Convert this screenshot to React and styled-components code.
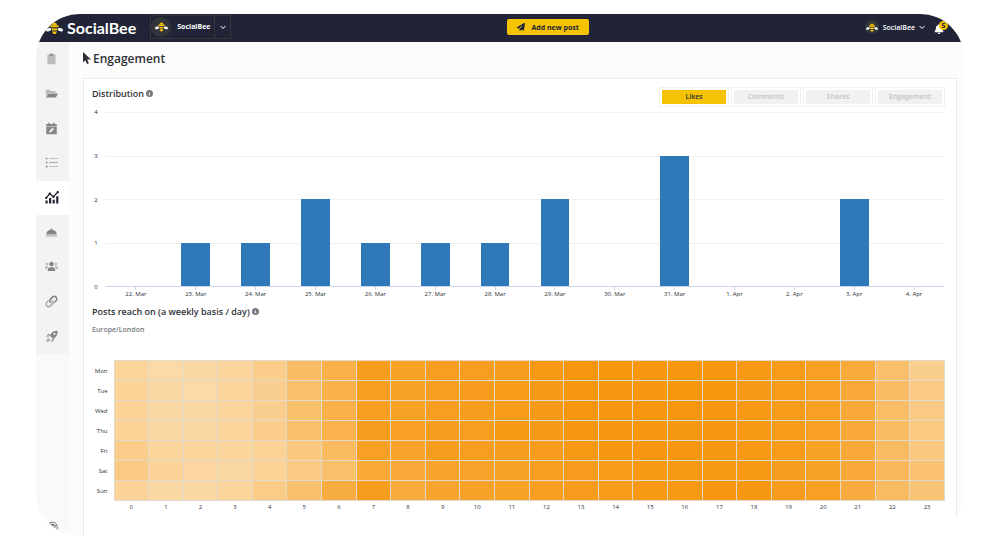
import React, { useState } from 'react';
import styled, { createGlobalStyle } from 'styled-components';
import {
  FaBell,
  FaChevronDown,
  FaCircleInfo,
  FaPaperPlane,
} from 'react-icons/fa6';

const GlobalStyle = createGlobalStyle`
*{
  box-sizing: border-box;
}
body{
  margin: 0;
  background-color: #fff;
  color: #2f3136;
  font-family: 'Open Sans', 'Noto Sans', sans-serif;
}
button{
  font-family: inherit;
  cursor: pointer;
}
svg{
  display: block;
}
`
const Frame = styled.div`
display: flex;
flex-direction: column;
min-height: calc(100vh - 28px);
margin: 14px 36px;
border-radius: 44px;
background-color: #fcfcfc;
overflow: hidden;
`
const Header = styled.header`
display: flex;
align-items: center;
justify-content: space-between;
height: 28px;
padding: 0 20px 2px 10px;
background-color: #212436;
color: #fff;
`
const HeaderGroup = styled.div`
display: flex;
align-items: center;
gap: ${props => props.$gap}px;
`
const Brand = styled.a`
display: flex;
align-items: center;
gap: 4px;
padding-top: 2px;
color: #fff;
font-family: Lato, 'Open Sans', sans-serif;
font-size: 16px;
font-weight: 700;
line-height: 20px;
text-decoration: none;
`
const Workspace = styled.button`
display: flex;
align-items: center;
height: 24px;
padding: 0;
border: 1px dotted #4a4738;
background: none;
color: #fff;
font-size: 7px;
font-weight: 700;
`
const WorkspaceName = styled.span`
padding: 0 4px 2px 6px;
`
const WorkspaceArrow = styled.span`
display: flex;
align-items: center;
justify-content: center;
width: 16px;
height: 22px;
border-left: 1px dotted #4a4738;
`
const Avatar = styled.span`
display: flex;
align-items: center;
justify-content: center;
width: ${props => props.$size}px;
height: ${props => props.$size}px;
border-radius: 50%;
background-color: #33353b;
`
const AddButton = styled.button`
display: flex;
align-items: center;
gap: 6px;
height: 16px;
padding: 0 10px;
border: none;
border-radius: 2px;
background-color: #f6c304;
color: #212436;
font-size: 7px;
font-weight: 700;
`
const Account = styled.button`
display: flex;
align-items: center;
gap: 4px;
padding: 0;
border: none;
background: none;
color: #fff;
font-size: 7px;
font-weight: 600;
`
const Alerts = styled.button`
position: relative;
padding: 3px 0 0;
border: none;
background: none;
color: #fff;
`
const AlertCount = styled.span`
position: absolute;
top: 0;
right: -4px;
width: 9px;
height: 9px;
border-radius: 50%;
background-color: #f6c304;
color: #212436;
font-size: 7px;
font-weight: 700;
line-height: 9px;
text-align: center;
`
const Body = styled.div`
display: flex;
flex: 1;
`
const Sidebar = styled.aside`
display: flex;
flex-direction: column;
justify-content: space-between;
width: 33px;
background-color: #f9f9f9;
`
const Menu = styled.nav`
display: grid;
grid-auto-rows: 1fr;
height: 312px;
`
const MenuLink = styled.a`
display: flex;
align-items: center;
justify-content: center;
padding: 0 2px 1px 0;
background-color: ${props => props.$active ? '#fff' : '#f3f3f3'};
color: ${props => props.$active ? '#212436' : '#868686'};
`
const SidebarFoot = styled.a`
display: flex;
justify-content: center;
padding-bottom: 5px;
color: #5c5f63;
`
const Main = styled.main`
display: flex;
flex: 1;
flex-direction: column;
min-width: 0;
padding: 0 7px 0 14px;
`
const PageTitle = styled.h1`
display: flex;
align-items: center;
gap: 2px;
height: 36px;
margin: 0;
padding-bottom: 4px;
font-size: 12px;
font-weight: 600;
`
const Card = styled.section`
flex: 1;
padding: 8px 8px 16px;
border: 1px solid #e9e9e9;
border-bottom: none;
background-color: #fff;
`
const Toolbar = styled.div`
display: flex;
justify-content: space-between;
height: 20px;
`
const SectionTitle = styled.h2`
display: flex;
align-items: center;
gap: 2px;
height: 12px;
margin: 0;
font-size: 9px;
font-weight: 600;
svg{
  color: #77797d;
}
`
const Tabs = styled.div`
display: flex;
gap: 2px;
padding-right: 3px;
`
const Tab = styled.button`
min-width: 70px;
height: 20px;
padding: 2px;
border: 1px solid #f1f1f1;
background-color: ${props => props.$active ? '#f6c304' : '#f1f1f1'};
background-clip: content-box;
color: ${props => props.$active ? '#2f3136' : '#c3c3c3'};
font-size: 7px;
font-weight: 600;
line-height: 14px;
`
const Chart = styled.div`
display: grid;
grid-template-columns: 8px 1fr;
column-gap: 6px;
padding: 5px 4px 0 0;
`
const YAxis = styled.div`
display: flex;
flex-direction: column;
justify-content: space-between;
margin: -4px 0;
font-size: 6px;
line-height: 8px;
text-align: center;
`
const Plot = styled.div`
display: grid;
height: 175px;
border-bottom: 1px solid #ccd6eb;
`
const GridLines = styled.div`
display: grid;
grid-area: 1 / 1;
grid-auto-rows: 1fr;
`
const GridLine = styled.div`
border-top: 1px solid #f0f0f0;
`
const Bars = styled.div`
display: grid;
grid-area: 1 / 1;
grid-template-columns: repeat(14, 1fr);
`
const BarSlot = styled.div`
display: flex;
align-items: flex-end;
justify-content: center;
`
const Bar = styled.div`
width: 48%;
background-color: #3079b8;
`
const Dates = styled.div`
display: grid;
grid-column: 2;
grid-template-columns: repeat(14, 1fr);
font-size: 6px;
line-height: 8px;
text-align: center;
`
const DateLabel = styled.span`
&::before{
  content: '';
  display: block;
  width: 1px;
  height: 3px;
  margin: 0 auto;
  background-color: #ccd6eb;
}
`
const Reach = styled.div`
padding-top: 7px;
`
const Zone = styled.p`
margin: 8px 0 25px;
color: #77797d;
font-size: 7px;
font-weight: 600;
line-height: 10px;
`
const HeatTable = styled.table`
width: calc(100% - 3px);
border-collapse: collapse;
table-layout: fixed;
font-size: 6px;
line-height: 8px;
`
const DayHead = styled.th`
width: 22px;
padding: 0 6px 0 0;
font-weight: 400;
text-align: right;
`
const HeatCell = styled.td`
height: 20px;
padding: 0;
border: 1px solid #e3d9c8;
`
const HourHead = styled.th`
padding: 2px 0 0;
font-weight: 400;
text-align: center;
`

const Bee = ({ size }) => (
  <svg width={size} height={size * 0.75} viewBox="0 0 24 18" aria-hidden="true">
    <path d="M7.500 9C5 7.500 0 8.500 0 11.500c0 2.500 5 2.800 7.500-.500z" fill="#fff" />
    <path d="M16.500 9c2.500-1.500 7.500-.5 7.500 2.500 0 2.500-5 2.800-7.500-.500z" fill="#fff" />
    <path d="M8.500 4.500a3.500 3.500 0 0 1 7 0z" fill="#f6c304" />
    <rect x="6" y="4.500" width="12" height="3" rx="1.500" fill="#f6c304" />
    <rect x="8.500" y="9" width="7" height="3" fill="#f6c304" />
    <path d="M8.500 13.500h7c-.5 2-2 3.500-3.500 4.500-1.500-1-3-2.500-3.500-4.500z" fill="#f6c304" />
  </svg>
)

const Cursor = () => (
  <svg width="8" height="12" viewBox="0 0 8 12" fill="currentColor" aria-hidden="true">
    <path d="M0 0v10.500l2.300-2.200L4 12l1.900-.8-1.700-3.600H8z" />
  </svg>
)

const Icon = ({ size = 13, children }) => (
  <svg width={size} height={size} viewBox="0 0 16 16" fill="currentColor" aria-hidden="true">
    {children}
  </svg>
)

const clipboard = (
  <Icon>
    <path d="M3 3h10v12H3z" opacity=".5" />
    <path d="M5.500 2h1.300a1.300 1.300 0 0 1 2.400 0h1.300v3h-5z" opacity=".7" />
  </Icon>
)
const folder = (
  <Icon>
    <path d="M1 12V4.500c0-.6.400-1 1-1h3.500L7 5h5c.600 0 1 .4 1 1v1.500H4z" opacity=".5" />
    <path d="M4.200 8H16l-2.600 5H1.200z" />
  </Icon>
)
const calendar = (
  <Icon>
    <path d="M1.500 2.500H4V1h2v1.500h4V1h2v1.500h2.500v3h-13z" />
    <path fillRule="evenodd" d="M1.500 6.300h13V15h-13zM5 13l2.200-.4 3.900-3.900-1.700-1.700-3.900 3.900z" />
  </Icon>
)
const list = (
  <Icon>
    <path d="M1 2h2v2H1zM1 7h2v2H1zM1 12h2v2H1z" />
    <path d="M5 2.500h11v1H5zM5 7.500h11v1H5zM5 12.500h11v1H5z" opacity=".65" />
  </Icon>
)
const analytics = (
  <Icon size={14}>
    <path d="M.5 12h2.500v3.500H.5zM4.600 9h2.500v6.500H4.600zM8.700 11h2.500v4.500H8.700zM12.800 7h2.500v8.500h-2.500z" />
    <path d="M1 9.500 5.500 4l4 3.800L15 2" fill="none" stroke="currentColor" strokeWidth="1.400" />
    <circle cx="1.400" cy="9" r="1.300" />
    <circle cx="5.600" cy="4.200" r="1.400" />
    <circle cx="9.600" cy="7.600" r="1.400" />
    <circle cx="14.600" cy="2.400" r="1.400" />
  </Icon>
)
const concierge = (
  <Icon>
    <path d="M1.500 10.500a6.300 6.300 0 0 1 5.600-6V3h1.800v1.500a6.300 6.300 0 0 1 5.600 6z" />
    <path d="M1 11.500h14V13H1z" opacity=".6" />
  </Icon>
)
const users = (
  <Icon>
    <circle cx="8" cy="5" r="2.800" />
    <path d="M3.300 13.500c0-3 1.200-4.500 3-4.500h3.400c1.800 0 3 1.500 3 4.500z" />
    <g opacity=".5">
      <circle cx="2.600" cy="5" r="1.600" />
      <circle cx="13.400" cy="5" r="1.600" />
      <path d="M0 11V9.500C0 8 1 7.500 2 7.500h2L2.800 11zM16 11V9.500c0-1.500-1-2-2-2h-2l1.200 3.500z" />
    </g>
  </Icon>
)
const link = (
  <Icon>
    <g fill="none" stroke="currentColor" strokeWidth="1.900" strokeLinecap="round">
      <path d="M7 9.300c-1.500-1.500-1.200-3.300 0-4.500l2.200-2.200a3 3 0 0 1 4.400 4.400l-1.400 1.500" />
      <path d="M9 6.700c1.500 1.500 1.200 3.300 0 4.500l-2.200 2.200A3 3 0 0 1 2.400 9l1.400-1.500" opacity=".65" />
    </g>
  </Icon>
)
const rocket = (
  <Icon>
    <path fillRule="evenodd" d="M15.500 1c.3 4.500-.9 7-5.200 10L6 7c2.400-4.600 5-6 9.500-6zM11.700 6a1.300 1.300 0 1 0 0-2.600 1.300 1.300 0 0 0 0 2.600z" />
    <path d="M6.500 4.500 3.500 5 1.500 8.500l3.500-.3zM11.500 9.800 11 13l-3.300 2 .3-3.600z" opacity=".7" />
    <path d="M4.500 9.500c-2 .3-2.800 2-3 5.500 3 0 5-1 5.200-3z" opacity=".55" />
  </Icon>
)
const faucet = (
  <Icon size={10}>
    <g fill="none" stroke="currentColor" strokeWidth="1.500" strokeLinejoin="round">
      <path d="M1 4.500C4 1 10 1 13 4.500c2 3 2 6 1.500 9.500H11V8L3 6.500z" />
      <path d="M2.500 5 10 5.500M11 8l2-2" />
    </g>
  </Icon>
)

const menu = [
  { name: 'Clipboard', icon: clipboard },
  { name: 'Folders', icon: folder },
  { name: 'Calendar', icon: calendar },
  { name: 'Lists', icon: list },
  { name: 'Analytics', icon: analytics, active: true },
  { name: 'Concierge', icon: concierge },
  { name: 'Audience', icon: users },
  { name: 'Links', icon: link },
  { name: 'Boost', icon: rocket },
]

const tabs = ['Likes', 'Comments', 'Shares', 'Engagement']

const maxLikes = 4
const likes = [
  { date: '22. Mar', value: 0 },
  { date: '23. Mar', value: 1 },
  { date: '24. Mar', value: 1 },
  { date: '25. Mar', value: 2 },
  { date: '26. Mar', value: 1 },
  { date: '27. Mar', value: 1 },
  { date: '28. Mar', value: 1 },
  { date: '29. Mar', value: 2 },
  { date: '30. Mar', value: 0 },
  { date: '31. Mar', value: 3 },
  { date: '1. Apr', value: 0 },
  { date: '2. Apr', value: 0 },
  { date: '3. Apr', value: 2 },
  { date: '4. Apr', value: 0 },
]

// reach per hour, 0 - 100
const reach = [
  { day: 'Mon', hours: [10, 2, 4, 9, 20, 44, 60, 89, 83, 88, 88, 89, 94, 99, 100, 98, 98, 98, 94, 92, 84, 70, 40, 19] },
  { day: 'Tue', hours: [12, 3, 2, 9, 18, 39, 60, 87, 82, 88, 90, 91, 93, 98, 98, 97, 100, 100, 93, 91, 84, 71, 44, 24] },
  { day: 'Wed', hours: [12, 3, 4, 9, 18, 39, 60, 87, 83, 88, 89, 91, 93, 99, 97, 99, 99, 97, 94, 91, 84, 71, 43, 24] },
  { day: 'Thu', hours: [12, 3, 5, 9, 20, 39, 59, 89, 84, 89, 86, 95, 93, 97, 98, 98, 96, 98, 95, 91, 84, 71, 46, 25] },
  { day: 'Fri', hours: [20, 9, 9, 9, 13, 27, 47, 84, 80, 89, 88, 89, 90, 94, 98, 97, 97, 96, 94, 92, 82, 71, 46, 27] },
  { day: 'Sat', hours: [24, 11, 7, 6, 12, 24, 39, 72, 71, 78, 80, 83, 87, 90, 92, 94, 94, 95, 94, 89, 82, 71, 51, 36] },
  { day: 'Sun', hours: [11, 3, 3, 9, 22, 38, 66, 89, 69, 77, 81, 82, 86, 90, 91, 95, 94, 97, 96, 90, 85, 68, 46, 33] },
]

const low = [251, 219, 170]
const high = [247, 149, 12]
const heatColor = (value) => {
  const mix = low.map((c, i) => Math.round(c + (high[i] - c) * value / 100))
  return `rgb(${mix.join(',')})`
}

const TopBar = () => (
  <Header>
    <HeaderGroup $gap={14}>
      <Brand href="#"><Bee size={17} />SocialBee</Brand>
      <Workspace>
        <Avatar $size={20}><Bee size={13} /></Avatar>
        <WorkspaceName>SocialBee</WorkspaceName>
        <WorkspaceArrow><FaChevronDown size={6} /></WorkspaceArrow>
      </Workspace>
    </HeaderGroup>
    <AddButton><FaPaperPlane size={8} />Add new post</AddButton>
    <HeaderGroup $gap={9}>
      <Account>
        <Avatar $size={14}><Bee size={12} /></Avatar>
        SocialBee
        <FaChevronDown size={6} />
      </Account>
      <Alerts aria-label="Notifications">
        <FaBell size={10} />
        <AlertCount>5</AlertCount>
      </Alerts>
    </HeaderGroup>
  </Header>
)

const LikesChart = () => (
  <Chart>
    <YAxis>
      {[4, 3, 2, 1, 0].map(n => <span key={n}>{n}</span>)}
    </YAxis>
    <Plot>
      <GridLines>
        {[4, 3, 2, 1].map(n => <GridLine key={n} />)}
      </GridLines>
      <Bars>
        {likes.map(item =>
          <BarSlot key={item.date}>
            <Bar style={{ height: `${item.value / maxLikes * 100}%` }} />
          </BarSlot>
        )}
      </Bars>
    </Plot>
    <Dates>
      {likes.map(item => <DateLabel key={item.date}>{item.date}</DateLabel>)}
    </Dates>
  </Chart>
)

const ReachTable = () => (
  <HeatTable>
    <tbody>
      {reach.map(row =>
        <tr key={row.day}>
          <DayHead scope="row">{row.day}</DayHead>
          {row.hours.map((value, hour) =>
            <HeatCell key={hour} style={{ backgroundColor: heatColor(value) }} />
          )}
        </tr>
      )}
    </tbody>
    <tfoot>
      <tr>
        <td />
        {reach[0].hours.map((_, hour) =>
          <HourHead key={hour} scope="col">{hour}</HourHead>
        )}
      </tr>
    </tfoot>
  </HeatTable>
)

const App = () => {
  const [tab, setTab] = useState('Likes')

  return (
    <>
      <GlobalStyle />
      <Frame>
        <TopBar />
        <Body>
          <Sidebar>
            <Menu>
              {menu.map(item =>
                <MenuLink key={item.name} href="#" aria-label={item.name} $active={item.active}>
                  {item.icon}
                </MenuLink>
              )}
            </Menu>
            <SidebarFoot href="#" aria-label="More">{faucet}</SidebarFoot>
          </Sidebar>
          <Main>
            <PageTitle><Cursor />Engagement</PageTitle>
            <Card>
              <Toolbar>
                <SectionTitle>Distribution<FaCircleInfo size={7} /></SectionTitle>
                <Tabs>
                  {tabs.map(name =>
                    <Tab key={name} $active={name === tab} onClick={() => setTab(name)}>{name}</Tab>
                  )}
                </Tabs>
              </Toolbar>
              <LikesChart />
              <Reach>
                <SectionTitle>Posts reach on (a weekly basis / day)<FaCircleInfo size={7} /></SectionTitle>
                <Zone>Europe/London</Zone>
                <ReachTable />
              </Reach>
            </Card>
          </Main>
        </Body>
      </Frame>
    </>
  )
}

export default App
